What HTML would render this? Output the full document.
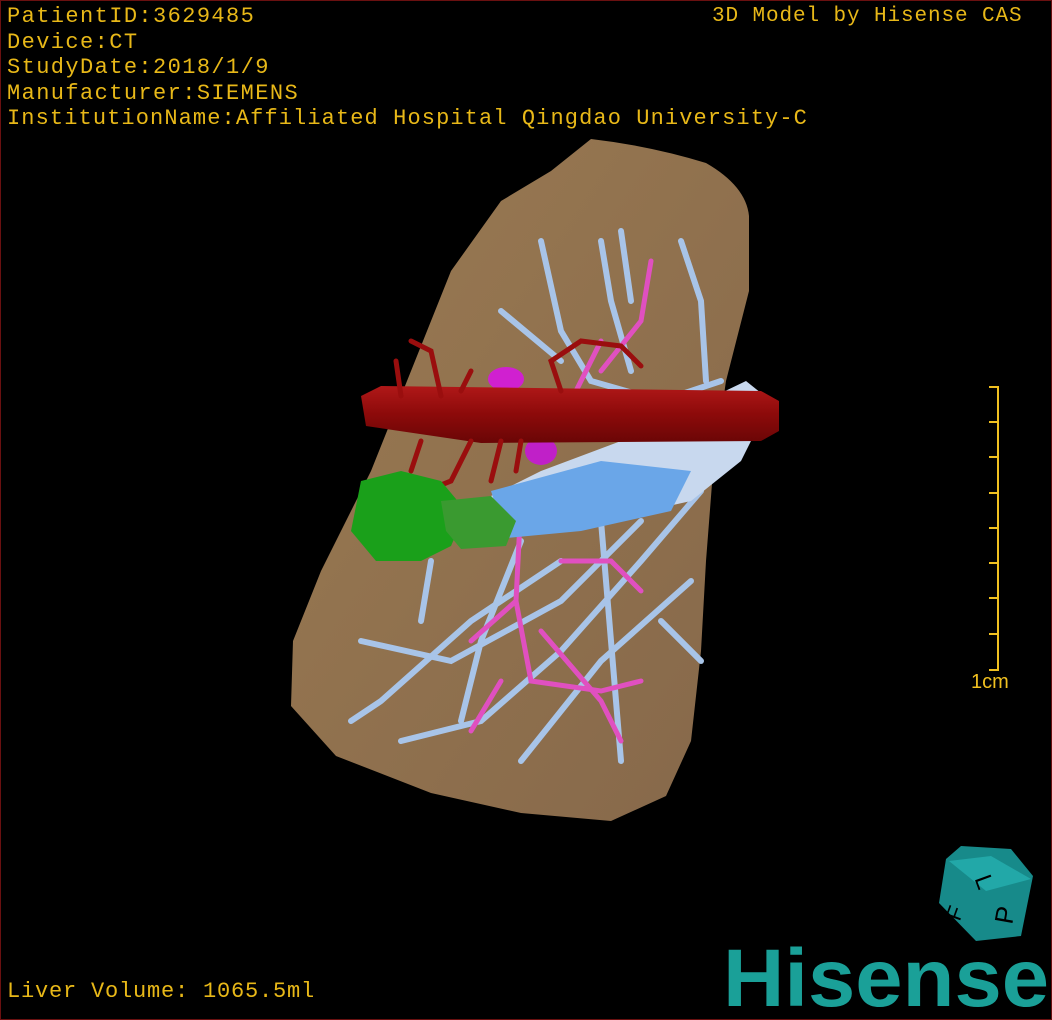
<!DOCTYPE html><html><head><style>
html,body{margin:0;padding:0;background:#000;}
.w{position:relative;width:1050px;height:1018px;border:1px solid #6a1010;overflow:hidden;background:#000;}
.t{position:absolute;left:6px;color:#e8b818;font-family:"Liberation Mono",monospace;font-size:22px;line-height:25.5px;letter-spacing:1.4px;white-space:pre;}
svg{position:absolute;left:0;top:0;}
</style></head><body><div class="w">
<svg width="1050" height="1018" viewBox="0 0 1050 1018">
<defs>
<linearGradient id="lv" x1="0" y1="0" x2="1" y2="1"><stop offset="0" stop-color="#9a7a52"/><stop offset="1" stop-color="#86684a"/></linearGradient>
<linearGradient id="rd" x1="0" y1="0" x2="0" y2="1"><stop offset="0" stop-color="#b01818"/><stop offset="0.5" stop-color="#8c0a0a"/><stop offset="1" stop-color="#6a0606"/></linearGradient>
</defs>
<path d="M590,138 Q650,145 705,162 Q745,185 748,215 L748,290 L725,380 L712,470 L705,560 L700,650 L690,740 L665,795 L610,820 L520,812 L430,792 L335,755 L290,705 L292,640 L320,570 L370,470 L410,370 L450,270 L500,200 L550,170 Z" fill="url(#lv)"/>
<g stroke="#a8c4e8" stroke-width="6" fill="none" stroke-linecap="round">
<path d="M540,240 L560,330 L590,380 L660,400 L720,380"/>
<path d="M600,240 L610,300 L630,370"/><path d="M680,240 L700,300 L705,380"/>
<path d="M500,310 L560,360"/><path d="M620,230 L630,300"/>
<path d="M700,490 L640,560 L560,650 L480,720 L400,740"/>
<path d="M690,580 L600,660 L520,760"/>
<path d="M640,520 L560,600 L450,660 L360,640"/>
<path d="M560,560 L470,620 L380,700 L350,720"/>
<path d="M600,520 L610,640 L620,760"/>
<path d="M520,540 L480,640 L460,720"/>
<path d="M430,560 L420,620"/><path d="M660,620 L700,660"/>
</g>
<g stroke="#e050c0" stroke-width="5" fill="none" stroke-linecap="round">
<path d="M520,500 L515,600 L530,680 L600,690 L640,680"/>
<path d="M515,600 L470,640"/><path d="M560,560 L610,560 L640,590"/>
<path d="M540,630 L600,700 L620,740"/><path d="M500,680 L470,730"/>
<path d="M650,260 L640,320 L600,370"/><path d="M560,420 L600,340"/>
</g>
<ellipse cx="505" cy="378" rx="18" ry="12" fill="#d020d0"/>
<ellipse cx="540" cy="450" rx="16" ry="14" fill="#c020c8"/>
<path d="M620,440 L745,380 L770,400 L740,460 L690,500 L600,520 L505,535 L490,495 L540,470 Z" fill="#c8d8ee"/>
<path d="M490,490 L600,460 L690,470 L670,510 L580,530 L505,537 Z" fill="#6aa6e8"/>
<path d="M360,395 L380,385 L760,390 L778,400 L778,430 L760,440 L480,442 L365,425 Z" fill="url(#rd)"/>
<g stroke="#9a0e0e" stroke-width="5" fill="none" stroke-linecap="round">
<path d="M560,390 L550,360 L580,340 L620,345 L640,365"/>
<path d="M440,395 L430,350 L410,340"/><path d="M400,395 L395,360"/>
<path d="M470,440 L450,480 L400,500"/><path d="M500,440 L490,480"/>
<path d="M420,440 L410,470"/><path d="M520,440 L515,470"/><path d="M460,390 L470,370"/>
</g>
<path d="M360,480 L400,470 L440,480 L465,510 L450,545 L420,560 L375,560 L350,530 Z" fill="#1aa01a"/>
<path d="M440,500 L490,495 L515,520 L505,545 L460,548 L445,530 Z" fill="#3a9a30"/>
<g stroke="#f0c020" stroke-width="2"><line x1="997" y1="385" x2="997" y2="670"/>
<line x1="988" y1="386" x2="997" y2="386"/><line x1="988" y1="421" x2="997" y2="421"/><line x1="988" y1="456" x2="997" y2="456"/><line x1="988" y1="492" x2="997" y2="492"/><line x1="988" y1="527" x2="997" y2="527"/><line x1="988" y1="562" x2="997" y2="562"/><line x1="988" y1="597" x2="997" y2="597"/><line x1="988" y1="633" x2="997" y2="633"/><line x1="988" y1="669" x2="997" y2="669"/></g>
<path d="M960,845 L1010,848 L1032,875 L1020,935 L975,940 L938,902 L945,858 Z" fill="#178a8a"/>
<path d="M948,860 L990,855 L1030,878 L985,890 Z" fill="#22a8a8"/>
<text x="980" y="882" font-family="Liberation Sans" font-size="24" fill="#000" transform="rotate(70 980 875)">L</text>
<text x="990" y="925" font-family="Liberation Sans" font-size="26" fill="#000" transform="rotate(-80 1000 912)">P</text>
<text x="944" y="920" font-family="Liberation Sans" font-size="22" fill="#000" transform="rotate(-70 952 910)">F</text>
<text x="722" y="1005" font-family="Liberation Sans" font-weight="bold" font-size="82" fill="#1aa098" textLength="326" lengthAdjust="spacingAndGlyphs">Hisense</text>
<text x="970" y="687" font-family="Liberation Sans" font-size="20" fill="#f0c020">1cm</text>
</svg>
<div class="t" style="top:3px">PatientID:3629485
Device:CT
StudyDate:2018/1/9
Manufacturer:SIEMENS
<span style="letter-spacing:1.1px">InstitutionName:Affiliated Hospital Qingdao University-C</span></div>
<div class="t" style="top:3px;left:711px;font-size:21px;letter-spacing:0.9px">3D Model by Hisense CAS</div>
<div class="t" style="top:978px;letter-spacing:0.8px">Liver Volume: 1065.5ml</div>
</div></body></html>
